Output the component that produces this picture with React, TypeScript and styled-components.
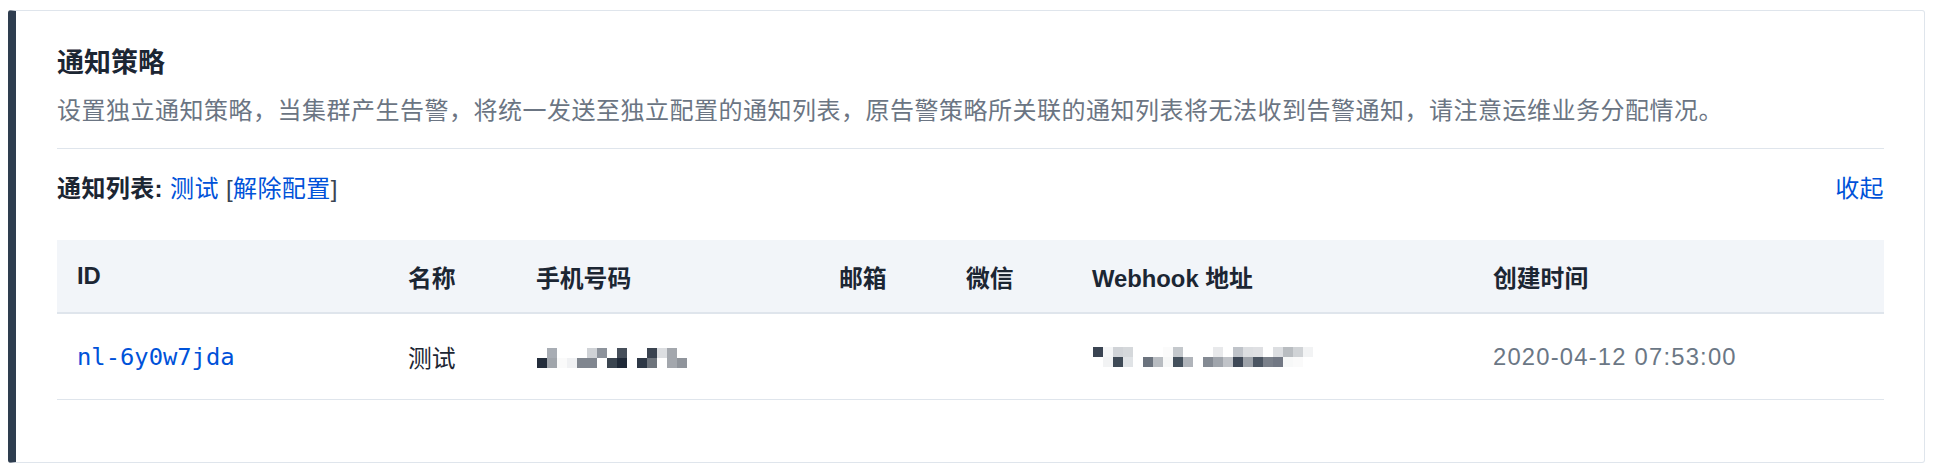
import React from 'react';
import styled, { createGlobalStyle } from 'styled-components';

const GlobalStyle = createGlobalStyle`
  html, body {
    margin: 0;
    background: #ffffff;
  }
  body {
    font-family: 'Liberation Sans', 'Noto Sans CJK SC', sans-serif;
    color: #1c2633;
  }
`;

// Layout
const Page = styled.div`
  padding: 10px 9px 7px 8px;
`;

const Panel = styled.section`
  border: 1px solid #dfe5ec;
  border-left: 8px solid #2e3d4f;
  border-radius: 3px;
  padding: 33px 40px 62px 41px;
`;

// Typography
const Title = styled.h2`
  margin: 0;
  font-size: 27px;
  line-height: 38px;
  font-weight: 700;
  color: #1c2633;
`;

const Description = styled.p`
  margin: 12px 0 0;
  font-size: 24px;
  letter-spacing: 0.5px;
  line-height: 34px;
  color: #6b7583;
`;

const Divider = styled.hr`
  margin: 20px 0 0;
  border: 0;
  border-top: 1px solid #dfe5ec;
`;

// Notify list bar
const ListBar = styled.div`
  margin-top: 23px;
  display: flex;
  justify-content: space-between;
  align-items: center;
  font-size: 24px;
  letter-spacing: 0.4px;
  line-height: 34px;
`;

const Label = styled.span`
  font-weight: 700;
  color: #1c2633;
`;

const Link = styled.a`
  color: #0052d9;
  text-decoration: none;
  cursor: pointer;
`;

const Bracket = styled.span`
  color: #3a4452;
`;

// Table
const columns = '331px 128px 303px 127px 126px 401px 1fr';

const Table = styled.div`
  margin-top: 34px;
`;

const Row = styled.div<{ $head?: boolean }>`
  display: grid;
  grid-template-columns: ${columns};
  align-items: center;
  box-sizing: border-box;
  height: ${(p) => (p.$head ? '74px' : '86px')};
  background: ${(p) => (p.$head ? '#f2f5f9' : '#ffffff')};
  border-bottom: ${(p) => (p.$head ? '2px' : '1px')} solid #dfe5ec;
`;

const HeadCell = styled.div`
  padding: 0 20px;
  font-size: 23.8px;
  font-weight: 700;
  color: #1c2633;
  white-space: nowrap;
`;

const Cell = styled.div<{ $muted?: boolean }>`
  padding: 0 20px;
  font-size: 23.8px;
  color: ${(p) => (p.$muted ? '#6b7785' : '#1c2633')};
  letter-spacing: ${(p) => (p.$muted ? '1.2px' : '0')};
  white-space: nowrap;
  display: flex;
  align-items: center;
`;

const MonoLink = styled(Link)`
  font-family: 'DejaVu Sans Mono', 'Liberation Mono', monospace;
  font-size: 23.8px;
`;

const MosaicSvg = styled.svg<{ $shift: number }>`
  display: block;
  margin-left: 1px;
  margin-top: ${(p) => p.$shift}px;
`;

// Redacted values (pixel mosaic)
type Pix = (string | null)[];

const phoneMosaic: Pix[] = [
  [null, '#a8adb4', null, null, null, '#cfd2d6', '#8d939c', null, '#464f5a', null, null, '#3a4350', '#dcdee1', '#a3a7ad', null],
  ['#232d3b', '#a0a5ab', '#fafafa', '#f0f1f3', '#80868f', '#80868f', null, '#3b4550', '#1f2937', null, '#2e3846', '#6e747c', null, '#a3a7ad', '#8f949b'],
];

const webhookMosaic: Pix[] = [
  ['#3a4452', '#f5f6f7', '#d0d3d7', '#d5d8db', null, null, null, '#fbfbfb', '#c4c8cc', null, null, null, '#e8e9eb', null, '#bfc3c9', '#dcdee1', '#dfe0e3', null, '#dcdee1', '#b9bdc1', '#d0d3d6', '#f2f3f4'],
  [null, '#f2f3f4', '#3f4a56', '#e0e3e6', null, '#6b737e', '#b8bcc1', '#f6f7f7', '#44505c', '#b0b4ba', null, '#848a93', '#a0a5ac', '#c0c3c8', '#3e4856', '#9da2a9', '#4b5562', '#7a808a', '#727884', '#f7f8f8', '#fafafa', null],
];

const Mosaic = ({ rows, shift = 0 }: { rows: Pix[]; shift?: number }) => {
  const size = 10;
  const w = rows[0].length * size;
  const h = rows.length * size;
  return (
    <MosaicSvg $shift={shift} width={w} height={h} viewBox={`0 0 ${w} ${h}`} aria-label="已隐藏">
      {rows.map((row, y) =>
        row.map((c, x) =>
          c ? <rect key={`${x}-${y}`} x={x * size} y={y * size} width={size} height={size} fill={c} /> : null
        )
      )}
    </MosaicSvg>
  );
};

const headers = ['ID', '名称', '手机号码', '邮箱', '微信', 'Webhook 地址', '创建时间'];

export default function App() {
  return (
    <>
      <GlobalStyle />
      <Page>
        <Panel>
          <Title>通知策略</Title>
          <Description>
            设置独立通知策略，当集群产生告警，将统一发送至独立配置的通知列表，原告警策略所关联的通知列表将无法收到告警通知，请注意运维业务分配情况。
          </Description>
          <Divider />
          <ListBar>
            <div>
              <Label>通知列表:</Label> <Link>测试</Link> <Bracket>[</Bracket>
              <Link>解除配置</Link>
              <Bracket>]</Bracket>
            </div>
            <Link>收起</Link>
          </ListBar>
          <Table>
            <Row $head>
              {headers.map((h) => (
                <HeadCell key={h}>{h}</HeadCell>
              ))}
            </Row>
            <Row>
              <Cell>
                <MonoLink>nl-6y0w7jda</MonoLink>
              </Cell>
              <Cell>测试</Cell>
              <Cell>
                <Mosaic rows={phoneMosaic} shift={3} />
              </Cell>
              <Cell />
              <Cell />
              <Cell>
                <Mosaic rows={webhookMosaic} />
              </Cell>
              <Cell $muted>2020-04-12 07:53:00</Cell>
            </Row>
          </Table>
        </Panel>
      </Page>
    </>
  );
}
